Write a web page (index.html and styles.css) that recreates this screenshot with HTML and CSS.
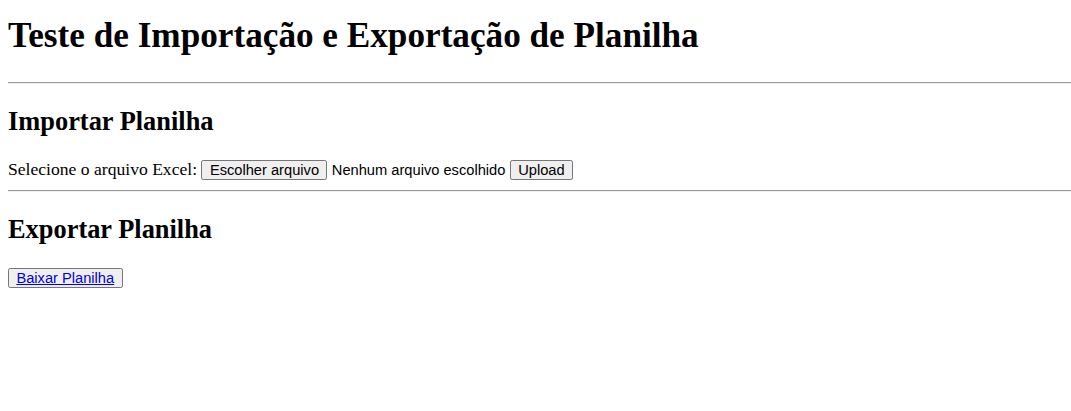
FILE: index.html
```html
<!DOCTYPE html>
<html lang="pt-BR">
<head>
<meta charset="utf-8">
<title>Teste de Importação e Exportação de Planilha</title>
<link rel="stylesheet" href="styles.css">
</head>
<body class="page">
<h1 class="title">Teste de Importação e Exportação de Planilha</h1>
<hr class="rule">
<h2 class="section-title">Importar Planilha</h2>
<form class="upload-form" onsubmit="return false">
<label class="field-label">Selecione o arquivo Excel:</label>
<span class="file-input"><button type="button" class="btn">Escolher arquivo</button><span class="file-name">Nenhum arquivo escolhido</span></span>
<button type="submit" class="btn">Upload</button>
</form>
<hr class="rule">
<h2 class="section-title">Exportar Planilha</h2>
<div class="export-row"><button type="button" class="btn"><a class="btn-link" href="#">Baixar Planilha</a></button></div>
</body>
</html>
```

FILE: styles.css
```css
html {
  background: #fff;
}
.page {
  margin: 0 0 0 8px;
  padding: 0;
  font-family: "Liberation Serif", "Times New Roman", serif;
  font-size: 17.6px;
  color: #000;
  background: #fff;
}
.title {
  font-size: 35.2px;
  line-height: 40px;
  font-weight: bold;
  margin: 16px 0 26px;
}
.section-title {
  font-size: 26.4px;
  line-height: 30px;
  font-weight: bold;
  margin: 22px 0 23px;
}
.rule {
  margin: 0;
  border: 0;
  border-top: 1px solid #9a9a9a;
  border-bottom: 1px solid #eeeeee;
  height: 0;
}
.upload-form {
  margin: 0 0 10px;
}
.file-input {
  font-family: "Liberation Sans", Arial, sans-serif;
  font-size: 14.67px;
}
.file-name {
  margin-left: 4.4px;
}
.export-row {
  margin: 0;
}
.btn {
  font-family: "Liberation Sans", Arial, sans-serif;
  font-size: 14.67px;
  color: #000;
  background: #efefef;
  border: 1px solid #767676;
  border-radius: 2.2px;
  padding: 1.1px 7.4px;
  margin: 0;
}
.btn-link {
  color: #0000ee;
  text-decoration: underline;
}
```
